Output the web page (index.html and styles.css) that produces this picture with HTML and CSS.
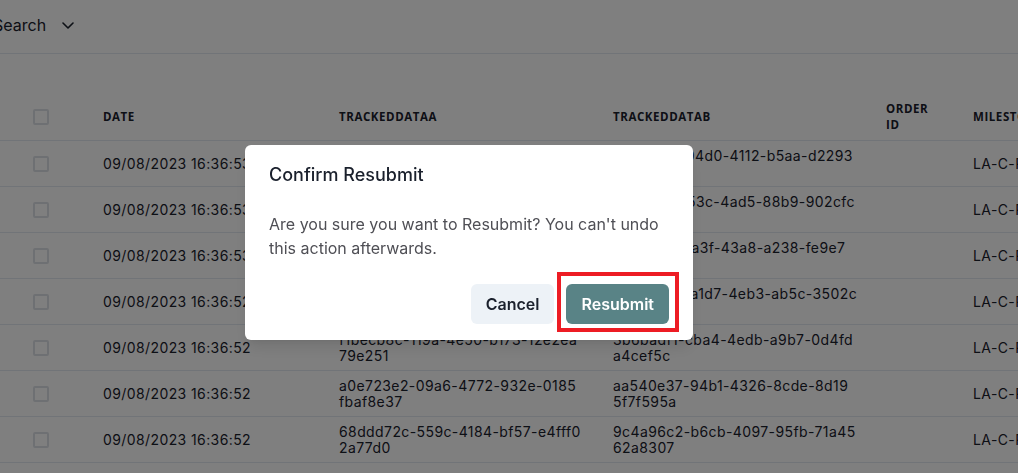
FILE: index.html
```html
<!DOCTYPE html>
<html lang="en">
<head>
<meta charset="utf-8">
<title>Tracked data – Confirm Resubmit</title>
<link rel="stylesheet" href="styles.css">
</head>
<body>
<div class="page">
  <div class="toolbar">
    <span class="toolbar-label">Search</span>
    <svg class="chevron" viewBox="0 0 12 7" width="12" height="7" aria-hidden="true"><path d="M1 1 L6 6 L11 1" fill="none" stroke="currentColor" stroke-width="1.6" stroke-linecap="round" stroke-linejoin="round"/></svg>
  </div>

  <div class="grid" role="table">
    <div class="row head" role="row">
      <div class="cell check"><span class="box"></span></div>
      <div class="cell">Date</div>
      <div class="cell">TrackedDataA</div>
      <div class="cell">TrackedDataB</div>
      <div class="cell order">Order ID</div>
      <div class="cell">Milestone</div>
    </div>

    <div class="row" role="row">
      <div class="cell check"><span class="box"></span></div>
      <div class="cell">09/08/2023 16:36:53</div>
      <div class="cell uuid">3f9c2b71-8e4d-4a06-9b1f-6d2e7<wbr>c5a8b04</div>
      <div class="cell uuid">7e21c9a3-04d0-4112-b5aa-d2293<wbr>f6c8e1b</div>
      <div class="cell"></div>
      <div class="cell mile">LA-C-RESUBMITTED</div>
    </div>
    <div class="row" role="row">
      <div class="cell check"><span class="box"></span></div>
      <div class="cell">09/08/2023 16:36:53</div>
      <div class="cell uuid">c27a9d14-5b3e-4f81-a6c2-0e9d4b<wbr>7f3a15</div>
      <div class="cell uuid">b1fe0f2d-153c-4ad5-88b9-902cfc<wbr>e31a7d</div>
      <div class="cell"></div>
      <div class="cell mile">LA-C-RESUBMITTED</div>
    </div>
    <div class="row" role="row">
      <div class="cell check"><span class="box"></span></div>
      <div class="cell">09/08/2023 16:36:53</div>
      <div class="cell uuid">8d04e6b2-1c7f-49a3-b5e8-72f1a9<wbr>c3d046</div>
      <div class="cell uuid">5d7a2e9f-1a3f-43a8-a238-fe9e7<wbr>c04b2d1</div>
      <div class="cell"></div>
      <div class="cell mile">LA-C-RESUBMITTED</div>
    </div>
    <div class="row" role="row">
      <div class="cell check"><span class="box"></span></div>
      <div class="cell">09/08/2023 16:36:52</div>
      <div class="cell uuid">e5a13c8f-7d29-4b60-8f4a-3c6b0d<wbr>92e7a8</div>
      <div class="cell uuid">e9b3c6a0-a1d7-4eb3-ab5c-3502c<wbr>8f1e6a9</div>
      <div class="cell"></div>
      <div class="cell mile">LA-C-RESUBMITTED</div>
    </div>
    <div class="row" role="row">
      <div class="cell check"><span class="box"></span></div>
      <div class="cell">09/08/2023 16:36:52</div>
      <div class="cell uuid">f1becb8c-119a-4e50-b173-12e2ea<wbr>79e251</div>
      <div class="cell uuid">3b6badf1-cba4-4edb-a9b7-0d4fd<wbr>a4cef5c</div>
      <div class="cell"></div>
      <div class="cell mile">LA-C-RESUBMITTED</div>
    </div>
    <div class="row" role="row">
      <div class="cell check"><span class="box"></span></div>
      <div class="cell">09/08/2023 16:36:52</div>
      <div class="cell uuid">a0e723e2-09a6-4772-932e-0185<wbr>fbaf8e37</div>
      <div class="cell uuid">aa540e37-94b1-4326-8cde-8d19<wbr>5f7f595a</div>
      <div class="cell"></div>
      <div class="cell mile">LA-C-RESUBMITTED</div>
    </div>
    <div class="row" role="row">
      <div class="cell check"><span class="box"></span></div>
      <div class="cell">09/08/2023 16:36:52</div>
      <div class="cell uuid">68ddd72c-559c-4184-bf57-e4fff0<wbr>2a77d0</div>
      <div class="cell uuid">9c4a96c2-b6cb-4097-95fb-71a45<wbr>62a8307</div>
      <div class="cell"></div>
      <div class="cell mile">LA-C-RESUBMITTED</div>
    </div>
  </div>
</div>

<div class="overlay"></div>

<div class="dialog-layer">
  <section class="dialog" role="alertdialog" aria-labelledby="dlg-title">
    <header class="dialog-header" id="dlg-title">Confirm Resubmit</header>
    <div class="dialog-body">Are you sure you want to Resubmit? You can't undo this action afterwards.</div>
    <footer class="dialog-footer">
      <button class="btn btn-cancel" type="button">Cancel</button>
      <span class="highlight-wrap">
        <button class="btn btn-primary" type="button">Resubmit</button>
        <span class="highlight"></span>
      </span>
    </footer>
  </section>
</div>
</body>
</html>
```

FILE: styles.css
```css
* { box-sizing: border-box; }

html, body {
  margin: 0;
  padding: 0;
  width: 1018px;
  height: 473px;
  overflow: hidden;
  background: #ffffff;
  font-family: Inter, "Noto Sans", sans-serif;
  color: #1a202c;
}

.page {
  width: 1018px;
  height: 473px;
  overflow: hidden;
}

/* top toolbar */
.toolbar {
  display: flex;
  align-items: center;
  gap: 16px;
  height: 54px;
  margin-left: -7px;
  border-bottom: 1px solid #e2e8f0;
  font-size: 16px;
  color: #1a202c;
}

.toolbar-label {
  line-height: 24px;
  padding-bottom: 4px;
}

.chevron {
  color: #1a202c;
  margin-bottom: 2px;
}

/* data grid */
.grid {
  margin-top: 39px;
  width: 1100px;
}

.row {
  display: grid;
  grid-template-columns: 79px 236px 274px 273px 87px 151px;
  align-items: center;
  height: 46px;
  border-bottom: 1px solid #e2e8f0;
  font-size: 14px;
  line-height: 16px;
  letter-spacing: 0.4px;
  color: #1a202c;
}

.row.head {
  height: 48px;
  font-family: "Open Sans", "Noto Sans", sans-serif;
  font-weight: 700;
  font-size: 11.5px;
  letter-spacing: 0.05em;
  text-transform: uppercase;
  line-height: 16px;
  color: #1a202c;
}

.cell {
  padding-left: 24px;
  white-space: nowrap;
  overflow: hidden;
}

.cell.check {
  padding-left: 33px;
  display: flex;
  align-items: center;
}

.box {
  display: block;
  width: 16px;
  height: 16px;
  border: 2px solid #dde1e6;
  border-radius: 2px;
}

.cell.order {
  white-space: normal;
  padding-right: 24px;
}

.cell.uuid {
  white-space: normal;
  padding-right: 0;
}

/* overlay + dialog */
.overlay {
  position: fixed;
  inset: 0;
  background: rgba(0, 0, 0, 0.5);
  z-index: 10;
}

.dialog-layer {
  position: fixed;
  inset: 0;
  z-index: 20;
  display: flex;
  align-items: flex-start;
  padding: 145px 0 0 245px;
}

.dialog {
  width: 448px;
  background: #ffffff;
  border-radius: 6px;
  box-shadow: 0 10px 15px -3px rgba(0,0,0,0.1), 0 4px 6px -2px rgba(0,0,0,0.05);
  font-family: Inter, "Noto Sans", sans-serif;
}

.dialog-header {
  padding: 16px 24px 0;
  font-size: 18px;
  line-height: 27px;
  font-weight: 500;
  color: #1a202c;
}

.dialog-body {
  padding: 24px 24px 8px;
  font-size: 16px;
  line-height: 24px;
  color: #4f4f55;
}

.dialog-footer {
  display: flex;
  justify-content: flex-end;
  gap: 12px;
  padding: 16px 24px 16px;
}

.btn {
  height: 40px;
  padding: 0 15px;
  border: 0;
  border-radius: 6px;
  font-family: Inter, "Noto Sans", sans-serif;
  font-size: 16px;
  font-weight: 600;
  line-height: 40px;
  cursor: pointer;
}

.btn-cancel {
  background: #edf2f7;
  color: #1a202c;
}

.btn-primary {
  background: #598386;
  color: #ffffff;
}

.highlight-wrap {
  position: relative;
  display: inline-flex;
}

.highlight {
  position: absolute;
  top: -12px;
  left: -9px;
  right: -10px;
  bottom: -8px;
  border: 4px solid #ed1c24;
  pointer-events: none;
}
```
